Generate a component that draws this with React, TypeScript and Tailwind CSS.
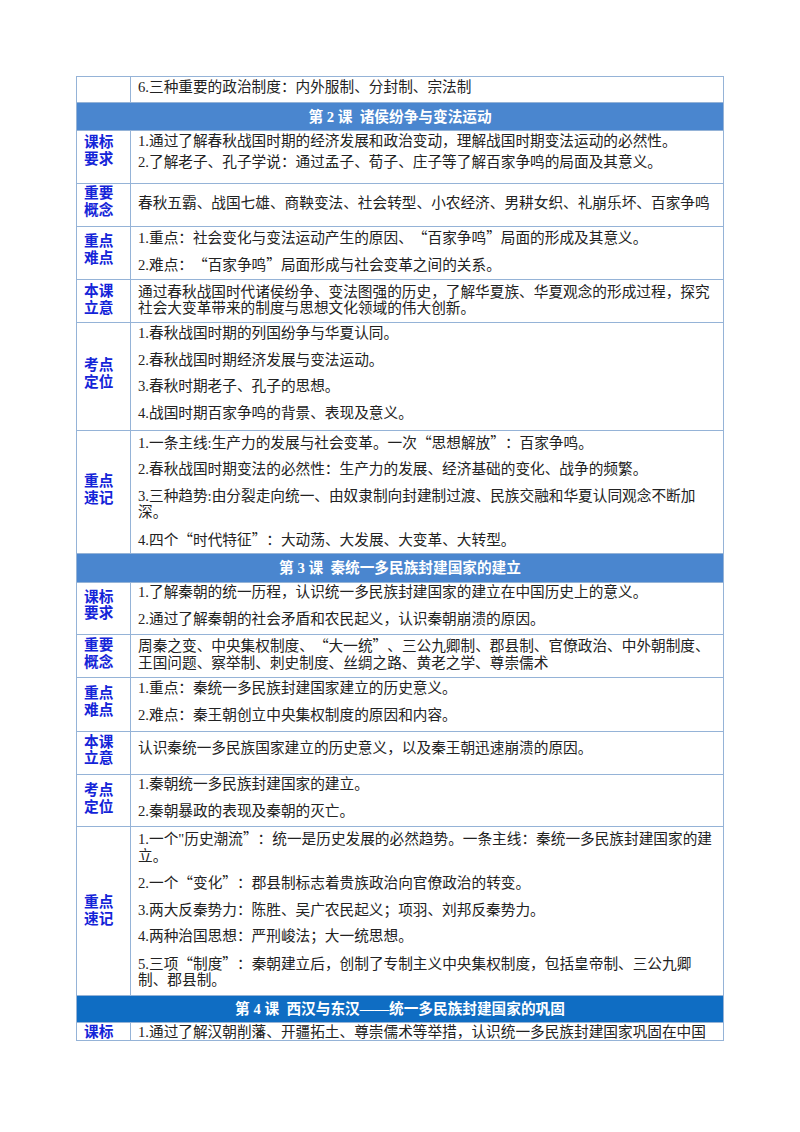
import React from 'react';

type BodyRow = {
  kind: 'row';
  label: string[];
  h: string;
  pt: string;
  labelPt: string;
  gap: string;
  paras: string[][];
};

type HeadRow = {
  kind: 'head';
  title: string;
  h: string;
  bg: string;
};

type Row = BodyRow | HeadRow;

const rows: Row[] = [
  { kind: 'row', label: [], h: 'h-[26px]', pt: 'pt-[2px]', labelPt: 'pt-0', gap: 'gap-0', paras: [['6.三种重要的政治制度：内外服制、分封制、宗法制']] },
  { kind: 'head', title: '第 2 课  诸侯纷争与变法运动', h: 'h-[28px]', bg: 'bg-[#4a86cf]' },
  {
    kind: 'row', label: ['课标', '要求'], h: 'h-[53px]', pt: 'pt-[2px]', labelPt: 'pt-[3px]', gap: 'gap-[4px]',
    paras: [
      ['1.通过了解春秋战国时期的经济发展和政治变动，理解战国时期变法运动的必然性。'],
      ['2.了解老子、孔子学说：通过孟子、荀子、庄子等了解百家争鸣的局面及其意义。'],
    ],
  },
  {
    kind: 'row', label: ['重要', '概念'], h: 'h-[43px]', pt: 'pt-[11px]', labelPt: 'pt-[1px]', gap: 'gap-0',
    paras: [['春秋五霸、战国七雄、商鞅变法、社会转型、小农经济、男耕女织、礼崩乐坏、百家争鸣']],
  },
  {
    kind: 'row', label: ['重点', '难点'], h: 'h-[53px]', pt: 'pt-[2px]', labelPt: 'pt-[6px]', gap: 'gap-[9.5px]',
    paras: [
      ['1.重点：社会变化与变法运动产生的原因、“百家争鸣”局面的形成及其意义。'],
      ['2.难点：“百家争鸣”局面形成与社会变革之间的关系。'],
    ],
  },
  {
    kind: 'row', label: ['本课', '立意'], h: 'h-[43px]', pt: 'pt-[3.5px]', labelPt: 'pt-[3px]', gap: 'gap-0',
    paras: [[
      '通过春秋战国时代诸侯纷争、变法图强的历史，了解华夏族、华夏观念的形成过程，探究',
      '社会大变革带来的制度与思想文化领域的伟大创新。',
    ]],
  },
  {
    kind: 'row', label: ['考点', '定位'], h: 'h-[108px]', pt: 'pt-[2px]', labelPt: 'pt-[34px]', gap: 'gap-[10px]',
    paras: [
      ['1.春秋战国时期的列国纷争与华夏认同。'],
      ['2.春秋战国时期经济发展与变法运动。'],
      ['3.春秋时期老子、孔子的思想。'],
      ['4.战国时期百家争鸣的背景、表现及意义。'],
    ],
  },
  {
    kind: 'row', label: ['重点', '速记'], h: 'h-[123px]', pt: 'pt-[2.5px]', labelPt: 'pt-[42px]', gap: 'gap-[10px]',
    paras: [
      ['1.一条主线:生产力的发展与社会变革。一次“思想解放”：百家争鸣。'],
      ['2.春秋战国时期变法的必然性：生产力的发展、经济基础的变化、战争的频繁。'],
      ['3.三种趋势:由分裂走向统一、由奴隶制向封建制过渡、民族交融和华夏认同观念不断加', '深。'],
      ['4.四个“时代特征”：大动荡、大发展、大变革、大转型。'],
    ],
  },
  { kind: 'head', title: '第 3 课  秦统一多民族封建国家的建立', h: 'h-[29px]', bg: 'bg-[#4a86cf]' },
  {
    kind: 'row', label: ['课标', '要求'], h: 'h-[52px]', pt: 'pt-[1px]', labelPt: 'pt-[5.5px]', gap: 'gap-[10px]',
    paras: [
      ['1.了解秦朝的统一历程，认识统一多民族封建国家的建立在中国历史上的意义。'],
      ['2.通过了解秦朝的社会矛盾和农民起义，认识秦朝崩溃的原因。'],
    ],
  },
  {
    kind: 'row', label: ['重要', '概念'], h: 'h-[43px]', pt: 'pt-[2px]', labelPt: 'pt-[2px]', gap: 'gap-0',
    paras: [[
      '周秦之变、中央集权制度、“大一统”、三公九卿制、郡县制、官僚政治、中外朝制度、',
      '王国问题、察举制、刺史制度、丝绸之路、黄老之学、尊崇儒术',
    ]],
  },
  {
    kind: 'row', label: ['重点', '难点'], h: 'h-[54px]', pt: 'pt-[2px]', labelPt: 'pt-[7px]', gap: 'gap-[10px]',
    paras: [
      ['1.重点：秦统一多民族封建国家建立的历史意义。'],
      ['2.难点：秦王朝创立中央集权制度的原因和内容。'],
    ],
  },
  {
    kind: 'row', label: ['本课', '立意'], h: 'h-[43px]', pt: 'pt-[8px]', labelPt: 'pt-[1.5px]', gap: 'gap-0',
    paras: [['认识秦统一多民族国家建立的历史意义，以及秦王朝迅速崩溃的原因。']],
  },
  {
    kind: 'row', label: ['考点', '定位'], h: 'h-[52px]', pt: 'pt-[1px]', labelPt: 'pt-[7px]', gap: 'gap-[10px]',
    paras: [
      ['1.秦朝统一多民族封建国家的建立。'],
      ['2.秦朝暴政的表现及秦朝的灭亡。'],
    ],
  },
  {
    kind: 'row', label: ['重点', '速记'], h: 'h-[169px]', pt: 'pt-[3px]', labelPt: 'pt-[67px]', gap: 'gap-[10px]',
    paras: [
      ['1.一个"历史潮流”：统一是历史发展的必然趋势。一条主线：秦统一多民族封建国家的建', '立。'],
      ['2.一个“变化”：郡县制标志着贵族政治向官僚政治的转变。'],
      ['3.两大反秦势力：陈胜、吴广农民起义；项羽、刘邦反秦势力。'],
      ['4.两种治国思想：严刑峻法；大一统思想。'],
      ['5.三项“制度”：秦朝建立后，创制了专制主义中央集权制度，包括皇帝制、三公九卿', '制、郡县制。'],
    ],
  },
  { kind: 'head', title: '第 4 课  西汉与东汉——统一多民族封建国家的巩固', h: 'h-[27px]', bg: 'bg-[#0f6dc3]' },
  {
    kind: 'row', label: ['课标'], h: 'h-[18px]', pt: 'pt-[0.5px]', labelPt: 'pt-[0.5px]', gap: 'gap-0',
    paras: [['1.通过了解汉朝削藩、开疆拓土、尊崇儒术等举措，认识统一多民族封建国家巩固在中国']],
  },
];

// quotes come out full width from the CJK face, as in the Word original
const Txt: React.FC<{ s: string }> = ({ s }) => (
  <>
    {s.split(/([“”])/).map((part, i) =>
      part === '“' || part === '”' ? (
        <span key={i} className="font-['Noto_Sans_CJK_SC',sans-serif]">
          {part}
        </span>
      ) : (
        <React.Fragment key={i}>{part}</React.Fragment>
      )
    )}
  </>
);

const HeadLine: React.FC<{ row: HeadRow }> = ({ row }) => (
  <div
    className={`flex items-center justify-center border-t border-[#95b3d7] ${row.h} ${row.bg} text-white font-bold whitespace-pre`}
  >
    <Txt s={row.title} />
  </div>
);

const BodyLine: React.FC<{ row: BodyRow }> = ({ row }) => (
  <div className={`flex border-t border-[#95b3d7] overflow-hidden ${row.h}`}>
    <div
      className={`w-[54px] shrink-0 border-r border-[#95b3d7] pl-[7px] ${row.labelPt} font-bold text-[#1424d8] leading-[16.5px]`}
    >
      {row.label.map((l) => (
        <div key={l}>{l}</div>
      ))}
    </div>
    <div className={`flex flex-1 flex-col pl-[7px] ${row.pt} ${row.gap} text-[#222] leading-[16.5px]`}>
      {row.paras.map((p, i) => (
        <div key={i}>
          {p.map((line, j) => (
            <div key={j} className="whitespace-nowrap">
              <Txt s={line} />
            </div>
          ))}
        </div>
      ))}
    </div>
  </div>
);

export default function App() {
  return (
    <div className="min-h-[1132px] bg-white pt-[76px] font-['Liberation_Serif','Noto_Sans_CJK_SC',serif] text-[14.67px] [text-spacing-trim:space-all]">
      <div className="mx-auto w-[648px] border-x border-b border-[#95b3d7]">
        {rows.map((r, i) =>
          r.kind === 'head' ? <HeadLine key={i} row={r} /> : <BodyLine key={i} row={r} />
        )}
      </div>
    </div>
  );
}
